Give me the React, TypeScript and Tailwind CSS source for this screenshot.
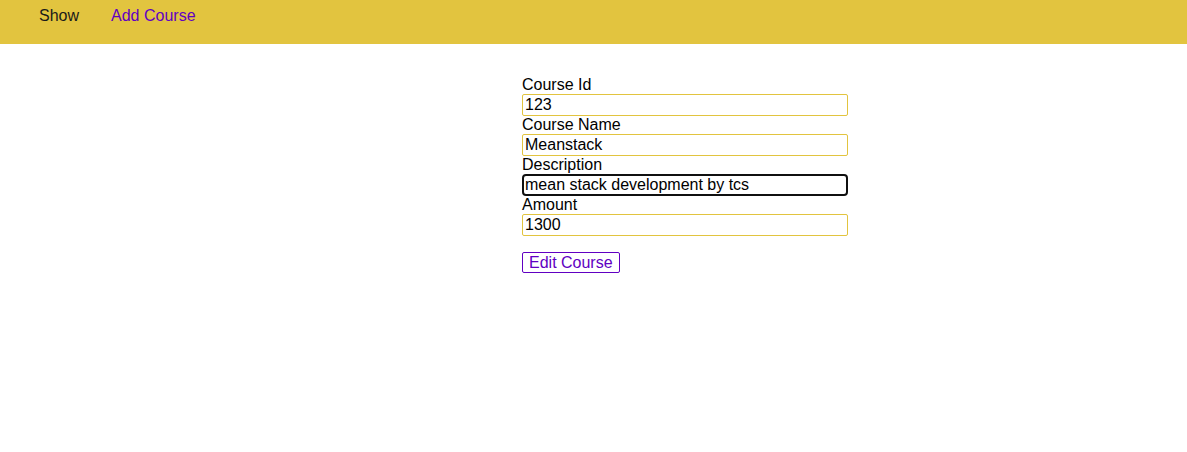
import React, { useEffect, useRef, useState } from "react";

const Field: React.FC<{ label: string; value: string; onChange: (v: string) => void; focus?: boolean }> = ({ label, value, onChange, focus }) => {
    const ref = useRef<HTMLInputElement>(null);
    useEffect(() => {
        if (focus && ref.current) ref.current.focus();
    }, [focus]);
    return (
        <>
            <label className="block leading-[18px]">{label}</label>
            <input
                ref={ref}
                value={value}
                onChange={(e) => onChange(e.target.value)}
                className="block w-[326px] h-[22px] px-[2px] border border-[#e2c43f] rounded-[2px] leading-[18px] text-black outline-none focus:border-2 focus:border-[#101010] focus:rounded-[4px] focus:px-[1px]"
            />
        </>
    );
};

export default function App() {
    const [id, setId] = useState("123");
    const [name, setName] = useState("Meanstack");
    const [desc, setDesc] = useState("mean stack development by tcs");
    const [amount, setAmount] = useState("1300");

    return (
        <div className="min-h-screen bg-white text-black text-[16px]" style={{ fontFamily: '"Liberation Sans", Arial, sans-serif' }}>
            <nav className="h-[44px] bg-[#e2c43f] flex items-start pt-[7px] pl-[39px] gap-[32px] leading-[18px]">
                <a href="#" className="text-[#1a1a1a]">Show</a>
                <a href="#" className="text-[#6100c2]">Add Course</a>
            </nav>
            <form className="ml-[522px] mt-[32px]" onSubmit={(e) => e.preventDefault()}>
                <Field label="Course Id" value={id} onChange={setId} />
                <Field label="Course Name" value={name} onChange={setName} />
                <Field label="Description" value={desc} onChange={setDesc} focus />
                <Field label="Amount" value={amount} onChange={setAmount} />
                <button
                    type="submit"
                    className="mt-[16px] h-[21px] px-[6px] border border-[#6100c2] rounded-[2px] bg-white text-[#6100c2] leading-[18px]"
                >
                    Edit Course
                </button>
            </form>
        </div>
    );
}
